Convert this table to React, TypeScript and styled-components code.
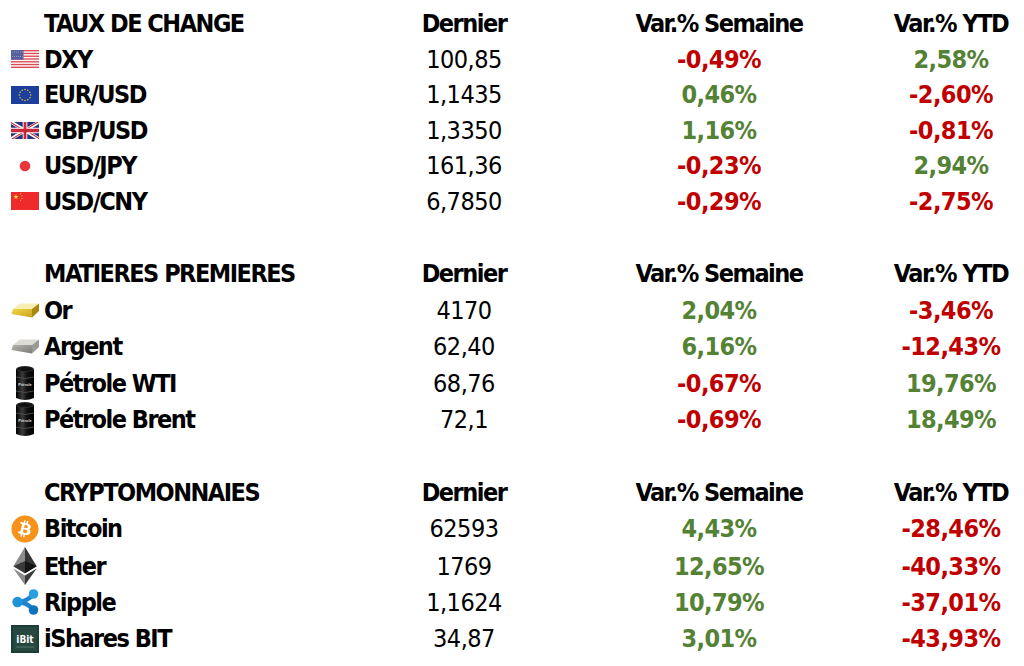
import { FC, ReactNode } from 'react';
import styled, { createGlobalStyle } from 'styled-components';
import { FaBitcoin } from 'react-icons/fa';

const GlobalStyle = createGlobalStyle`
    html, body {
        margin: 0;
        padding: 0;
        background: #ffffff;
        overflow: hidden;
    }
`;

const RED = '#c00000';
const GREEN = '#548235';
const FONT = '"DejaVu Sans Condensed", "Liberation Sans", sans-serif';

// ---------- icons ----------

const UsFlag: FC = () => (
    <svg width="28" height="18" viewBox="0 0 28 18" preserveAspectRatio="none">
        <rect width="28" height="18" fill="#fff" />
        {Array.from({ length: 7 }).map((_, i) => (
            <rect key={i} y={(i * 2 * 18) / 13} width="28" height={18 / 13} fill="#dc4a55" />
        ))}
        <rect width="12.5" height={(7 * 18) / 13} fill="#56609c" />
        {Array.from({ length: 12 }).map((_, i) => (
            <circle key={i} cx={1.5 + (i % 6) * 2} cy={2 + Math.floor(i / 6) * 4.5} r="0.45" fill="#c8cde6" />
        ))}
    </svg>
);

const EuFlag: FC = () => (
    <svg width="28" height="18" viewBox="0 0 28 18">
        <rect width="28" height="18" fill="#1d3f9c" />
        {Array.from({ length: 12 }).map((_, i) => {
            const a = (i * Math.PI) / 6;
            return <circle key={i} cx={14 + Math.cos(a) * 5.6} cy={9 + Math.sin(a) * 5.6} r="0.75" fill="#e8c93a" />;
        })}
    </svg>
);

const UkFlag: FC = () => (
    <svg width="28" height="17" viewBox="0 0 60 30" preserveAspectRatio="none">
        <clipPath id="ukclip">
            <path d="M30,15 h30 v15 z v15 h-30 z h-30 v-15 z v-15 h30 z" />
        </clipPath>
        <rect width="60" height="30" fill="#27337a" />
        <path d="M0,0 L60,30 M60,0 L0,30" stroke="#fff" strokeWidth="6" />
        <path d="M0,0 L60,30 M60,0 L0,30" clipPath="url(#ukclip)" stroke="#c8283a" strokeWidth="4" />
        <path d="M30,0 v30 M0,15 h60" stroke="#fff" strokeWidth="10" />
        <path d="M30,0 v30 M0,15 h60" stroke="#c8283a" strokeWidth="6" />
    </svg>
);

const JpFlag: FC = () => (
    <svg width="28" height="18" viewBox="0 0 28 18">
        <circle cx="14" cy="9" r="5.3" fill="#e8363c" />
    </svg>
);

const star = (cx: number, cy: number, r: number) => {
    const pts: string[] = [];
    for (let i = 0; i < 10; i++) {
        const rr = i % 2 === 0 ? r : r * 0.4;
        const a = -Math.PI / 2 + (i * Math.PI) / 5;
        pts.push(`${cx + Math.cos(a) * rr},${cy + Math.sin(a) * rr}`);
    }
    return pts.join(' ');
};

const CnFlag: FC = () => (
    <svg width="28" height="18" viewBox="0 0 28 18">
        <rect width="28" height="18" fill="#ee2a2a" />
        <polygon points={star(5, 4.8, 2.8)} fill="#f8e03a" />
        <polygon points={star(9.5, 1.8, 0.9)} fill="#f8e03a" />
        <polygon points={star(11, 3.8, 0.9)} fill="#f8e03a" />
        <polygon points={star(11, 6.3, 0.9)} fill="#f8e03a" />
        <polygon points={star(9.5, 8.2, 0.9)} fill="#f8e03a" />
    </svg>
);

type BarProps = { id: string; top: string; front: string; front2: string; side: string };

// ingot seen from the front-top: narrow light top face, wide front face
const Bar: FC<BarProps> = ({ id, top, front, front2, side }) => (
    <svg width="29" height="17" viewBox="0 0 29 17">
        <defs>
            <linearGradient id={id} x1="0" y1="0" x2="1" y2="1">
                <stop offset="0" stopColor={front} />
                <stop offset="1" stopColor={front2} />
            </linearGradient>
        </defs>
        <polygon points="2,7 9,1.5 28,1.5 21,7" fill={top} />
        <polygon points="2,7 21,7 21,15.5 0.5,12" fill={`url(#${id})`} />
        <polygon points="21,7 28,1.5 28,9 21,15.5" fill={side} />
    </svg>
);

const Barrel: FC = () => (
    <svg width="22" height="37" viewBox="0 0 22 37">
        <defs>
            <linearGradient id="barrelg" x1="0" y1="0" x2="1" y2="0">
                <stop offset="0" stopColor="#000" />
                <stop offset="0.35" stopColor="#3a3a3a" />
                <stop offset="0.6" stopColor="#111" />
                <stop offset="1" stopColor="#000" />
            </linearGradient>
        </defs>
        <path d="M2,4 L2,33 Q11,37 20,33 L20,4 Z" fill="url(#barrelg)" />
        <ellipse cx="11" cy="4" rx="9" ry="3" fill="#2c2c2c" />
        <ellipse cx="11" cy="4" rx="7.5" ry="2" fill="#111" />
        <path d="M2,12 Q11,15 20,12 M2,26 Q11,29 20,26" stroke="#555" strokeWidth="0.8" fill="none" />
        <text x="11" y="21" fontSize="4" fill="#ddd" textAnchor="middle" fontFamily="Liberation Sans, sans-serif" fontWeight="bold">
            Pétrole
        </text>
    </svg>
);

const Ether: FC = () => (
    <svg width="24" height="38" viewBox="0 0 256 417">
        <polygon points="127.96,0 125.17,9.5 125.17,285.17 127.96,287.96 255.92,212.32" fill="#343434" />
        <polygon points="127.96,0 0,212.32 127.96,287.96 127.96,154.16" fill="#8c8c8c" />
        <polygon points="127.96,312.19 126.38,314.1 126.38,412.3 127.96,416.9 255.99,236.59" fill="#3c3c3b" />
        <polygon points="127.96,416.9 127.96,312.19 0,236.59" fill="#8c8c8c" />
        <polygon points="127.96,287.96 255.92,212.32 127.96,154.16" fill="#141414" />
        <polygon points="0,212.32 127.96,287.96 127.96,154.16" fill="#393939" />
    </svg>
);

const Ripple: FC = () => (
    <svg width="27" height="26" viewBox="0 0 27 26">
        <g stroke="#1a86cf" strokeWidth="4.5" fill="none" strokeLinecap="round">
            <path d="M6,13 Q14,13 21.5,5.5" />
            <path d="M6,13 Q14,13 21.5,20.5" />
        </g>
        <circle cx="5.5" cy="13" r="5.2" fill="#1f93d8" />
        <circle cx="21.5" cy="5" r="4.8" fill="#2a9ee0" />
        <circle cx="21.5" cy="21" r="4.8" fill="#0f74bb" />
    </svg>
);

const IBit: FC = () => (
    <svg width="28" height="28" viewBox="0 0 28 28">
        <rect width="28" height="28" fill="#1e3d37" />
        <rect x="2" y="2" width="24" height="24" fill="#2b5046" opacity="0.6" />
        <text x="14" y="17.5" fontSize="10" fill="#fff" textAnchor="middle" fontFamily="DejaVu Sans Condensed, sans-serif" fontWeight="bold">
            iBit
        </text>
        <line x1="5" y1="22" x2="23" y2="22" stroke="#7fa898" strokeWidth="0.5" />
    </svg>
);

// ---------- data ----------

type Item = { icon: ReactNode; name: string; last: string; week: string; ytd: string };
type Section = { title: string; rowHeight: number; gap: number; items: Item[] };

const sections: Section[] = [
    {
        title: 'TAUX DE CHANGE',
        rowHeight: 35.6,
        gap: 5.7,
        items: [
            { icon: <UsFlag />, name: 'DXY', last: '100,85', week: '-0,49%', ytd: '2,58%' },
            { icon: <EuFlag />, name: 'EUR/USD', last: '1,1435', week: '0,46%', ytd: '-2,60%' },
            { icon: <UkFlag />, name: 'GBP/USD', last: '1,3350', week: '1,16%', ytd: '-0,81%' },
            { icon: <JpFlag />, name: 'USD/JPY', last: '161,36', week: '-0,23%', ytd: '2,94%' },
            { icon: <CnFlag />, name: 'USD/CNY', last: '6,7850', week: '-0,29%', ytd: '-2,75%' },
        ],
    },
    {
        title: 'MATIERES PREMIERES',
        rowHeight: 36.25,
        gap: 36.6,
        items: [
            {
                icon: <Bar id="gold" top="#f6eeb2" front="#f2d649" front2="#c9a21c" side="#a8870f" />,
                name: 'Or', last: '4170', week: '2,04%', ytd: '-3,46%',
            },
            {
                icon: <Bar id="silver" top="#dcdcd4" front="#b4b4ac" front2="#7c7c76" side="#9a9a94" />,
                name: 'Argent', last: '62,40', week: '6,16%', ytd: '-12,43%',
            },
            { icon: <Barrel />, name: 'Pétrole WTI', last: '68,76', week: '-0,67%', ytd: '19,76%' },
            { icon: <Barrel />, name: 'Pétrole Brent', last: '72,1', week: '-0,69%', ytd: '18,49%' },
        ],
    },
    {
        title: 'CRYPTOMONNAIES',
        rowHeight: 36.6,
        gap: 37,
        items: [
            { icon: <FaBitcoin size={28} color="#f7931a" />, name: 'Bitcoin', last: '62593', week: '4,43%', ytd: '-28,46%' },
            { icon: <Ether />, name: 'Ether', last: '1769', week: '12,65%', ytd: '-40,33%' },
            { icon: <Ripple />, name: 'Ripple', last: '1,1624', week: '10,79%', ytd: '-37,01%' },
            { icon: <IBit />, name: 'iShares BIT', last: '34,87', week: '3,01%', ytd: '-43,93%' },
        ],
    },
];

// ---------- layout ----------

const Page = styled.main`
    width: 1024px;
    height: 666px;
    display: flex;
    flex-direction: column;
`;

const Block = styled.section<{ $gap: number }>`
    margin-top: ${p => p.$gap}px;
`;

const Row = styled.div<{ $height: number }>`
    height: ${p => p.$height}px;
    display: grid;
    grid-template-columns: 44px 336px 168px 342px 122px;
    align-items: center;
    white-space: nowrap;
`;

const IconCell = styled.div`
    padding-left: 6px;
    display: flex;
    justify-content: center;
    align-items: center;
    height: 100%;
`;

const Label = styled.div`
    font-family: ${FONT};
    font-weight: bold;
    font-size: 25px;
    letter-spacing: -1.5px;
    color: #000;
`;

const HeadCell = styled(Label)`
    justify-self: center;
`;

const Last = styled.div`
    justify-self: center;
    font-family: ${FONT};
    font-size: 25px;
    letter-spacing: -0.5px;
    color: #000;
`;

const Change = styled.div<{ $neg: boolean }>`
    justify-self: center;
    font-family: ${FONT};
    font-weight: bold;
    font-size: 25px;
    letter-spacing: -0.6px;
    color: ${p => (p.$neg ? RED : GREEN)};
`;

const Pct: FC<{ value: string }> = ({ value }) => <Change $neg={value.startsWith('-')}>{value}</Change>;

const App: FC = () => (
    <>
        <GlobalStyle />
        <Page>
            {sections.map(s => (
                <Block key={s.title} $gap={s.gap}>
                    <Row $height={s.rowHeight}>
                        <span />
                        <Label>{s.title}</Label>
                        <HeadCell>Dernier</HeadCell>
                        <HeadCell>Var.% Semaine</HeadCell>
                        <HeadCell>Var.% YTD</HeadCell>
                    </Row>
                    {s.items.map(item => (
                        <Row key={item.name} $height={s.rowHeight}>
                            <IconCell>{item.icon}</IconCell>
                            <Label>{item.name}</Label>
                            <Last>{item.last}</Last>
                            <Pct value={item.week} />
                            <Pct value={item.ytd} />
                        </Row>
                    ))}
                </Block>
            ))}
        </Page>
    </>
);

export default App;
